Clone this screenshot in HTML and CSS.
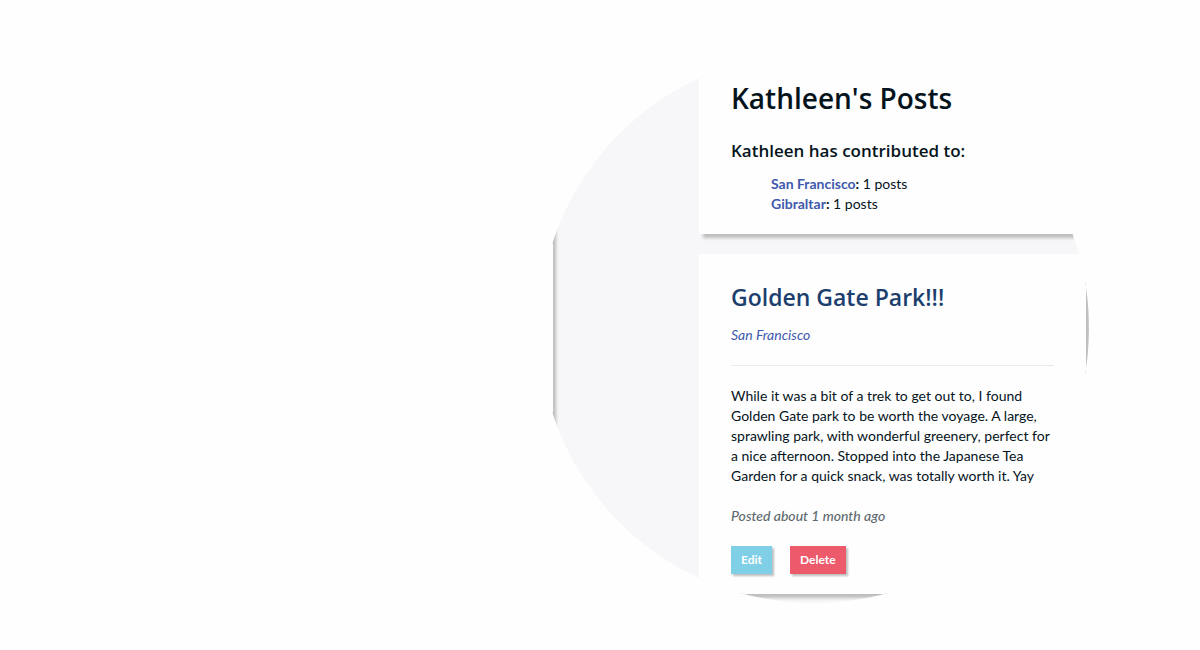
FILE: index.html
```html
<!DOCTYPE html>
<html lang="en">
<head>
<meta charset="utf-8">
<title>Kathleen's Posts</title>
<link rel="stylesheet" href="styles.css">
</head>
<body>
<main class="lens">
  <div class="side-panel"></div>
  <div class="feed">
    <section class="card summary">
      <h1 class="page-title">Kathleen's Posts</h1>
      <h2 class="subtitle">Kathleen has contributed to:</h2>
      <ul class="cities">
        <li><strong><a href="#">San Francisco</a>:</strong> 1 posts</li>
        <li><strong><a href="#">Gibraltar</a>:</strong> 1 posts</li>
      </ul>
    </section>
    <article class="card post">
      <h2 class="post-title">Golden Gate Park!!!</h2>
      <a class="post-city" href="#">San Francisco</a>
      <p class="post-body">While it was a bit of a trek to get out to, I found Golden Gate park to be worth the voyage. A large, sprawling park, with wonderful greenery, perfect for a nice afternoon. Stopped into the Japanese Tea Garden for a quick snack, was totally worth it. Yay</p>
      <p class="posted">Posted about 1 month ago</p>
      <div class="actions">
        <button class="btn edit" type="button">Edit</button>
        <button class="btn delete" type="button">Delete</button>
      </div>
    </article>
  </div>
</main>
</body>
</html>
```

FILE: styles.css
```css
* {
  box-sizing: border-box;
}

body {
  margin: 0;
  padding: 53px 111px 0 0;
  background: #fefefe;
  color: #05141c;
  font: 14px/20px Lato, sans-serif;
}

h1, h2, p, ul {
  margin: 0;
}

a {
  color: #4059ad;
  text-decoration: none;
}

/* Circular window onto the page */
.lens {
  display: flex;
  width: 550px;
  aspect-ratio: 1;
  margin-left: auto;
  padding-right: 3px;
  clip-path: circle(50%);
  background: #f7f7f9;
}

.side-panel {
  width: 14px;
  background: #fefefe;
  box-shadow: 3px 3px 3px #bebebe;
}

.feed {
  display: flex;
  flex: 1;
  flex-direction: column;
  gap: 20px;
  margin-left: 146px;
}

.card {
  padding: 0 32px;
  background: #fefefe;
  box-shadow: 4px 4px 3px #bebebe;
}

.summary {
  padding-top: 25px;
  padding-bottom: 20px;
}

.page-title,
.subtitle,
.post-title {
  font-family: "Open Sans", sans-serif;
  font-weight: 600;
}

.page-title {
  font-size: 28px;
  line-height: 40px;
}

.subtitle {
  margin-top: 21px;
  font-size: 17px;
  line-height: 24px;
}

.cities {
  margin-top: 11px;
  padding-left: 40px;
  list-style: none;
}

.post {
  padding-top: 27px;
  padding-bottom: 20px;
}

.post-title {
  margin-bottom: 12px;
  color: #1c3f6e;
  font-size: 23px;
  line-height: 32px;
}

.post-city {
  display: block;
  padding-bottom: 20px;
  border-bottom: 1px solid #eaeaea;
  font-style: italic;
}

.post-body {
  margin-top: 20px;
}

.posted {
  margin: 20px 0;
  color: #5f6a6f;
  font-style: italic;
  font-weight: 500;
}

.actions {
  display: flex;
  gap: 18px;
}

.btn {
  padding: 0 10px;
  border: 0;
  color: #fff;
  box-shadow: 2px 2px 2px #bebebe;
  font: 700 12px/28px Lato, sans-serif;
}

.edit {
  background: #7fcfe7;
}

.delete {
  background: #ed5a6c;
}
```
